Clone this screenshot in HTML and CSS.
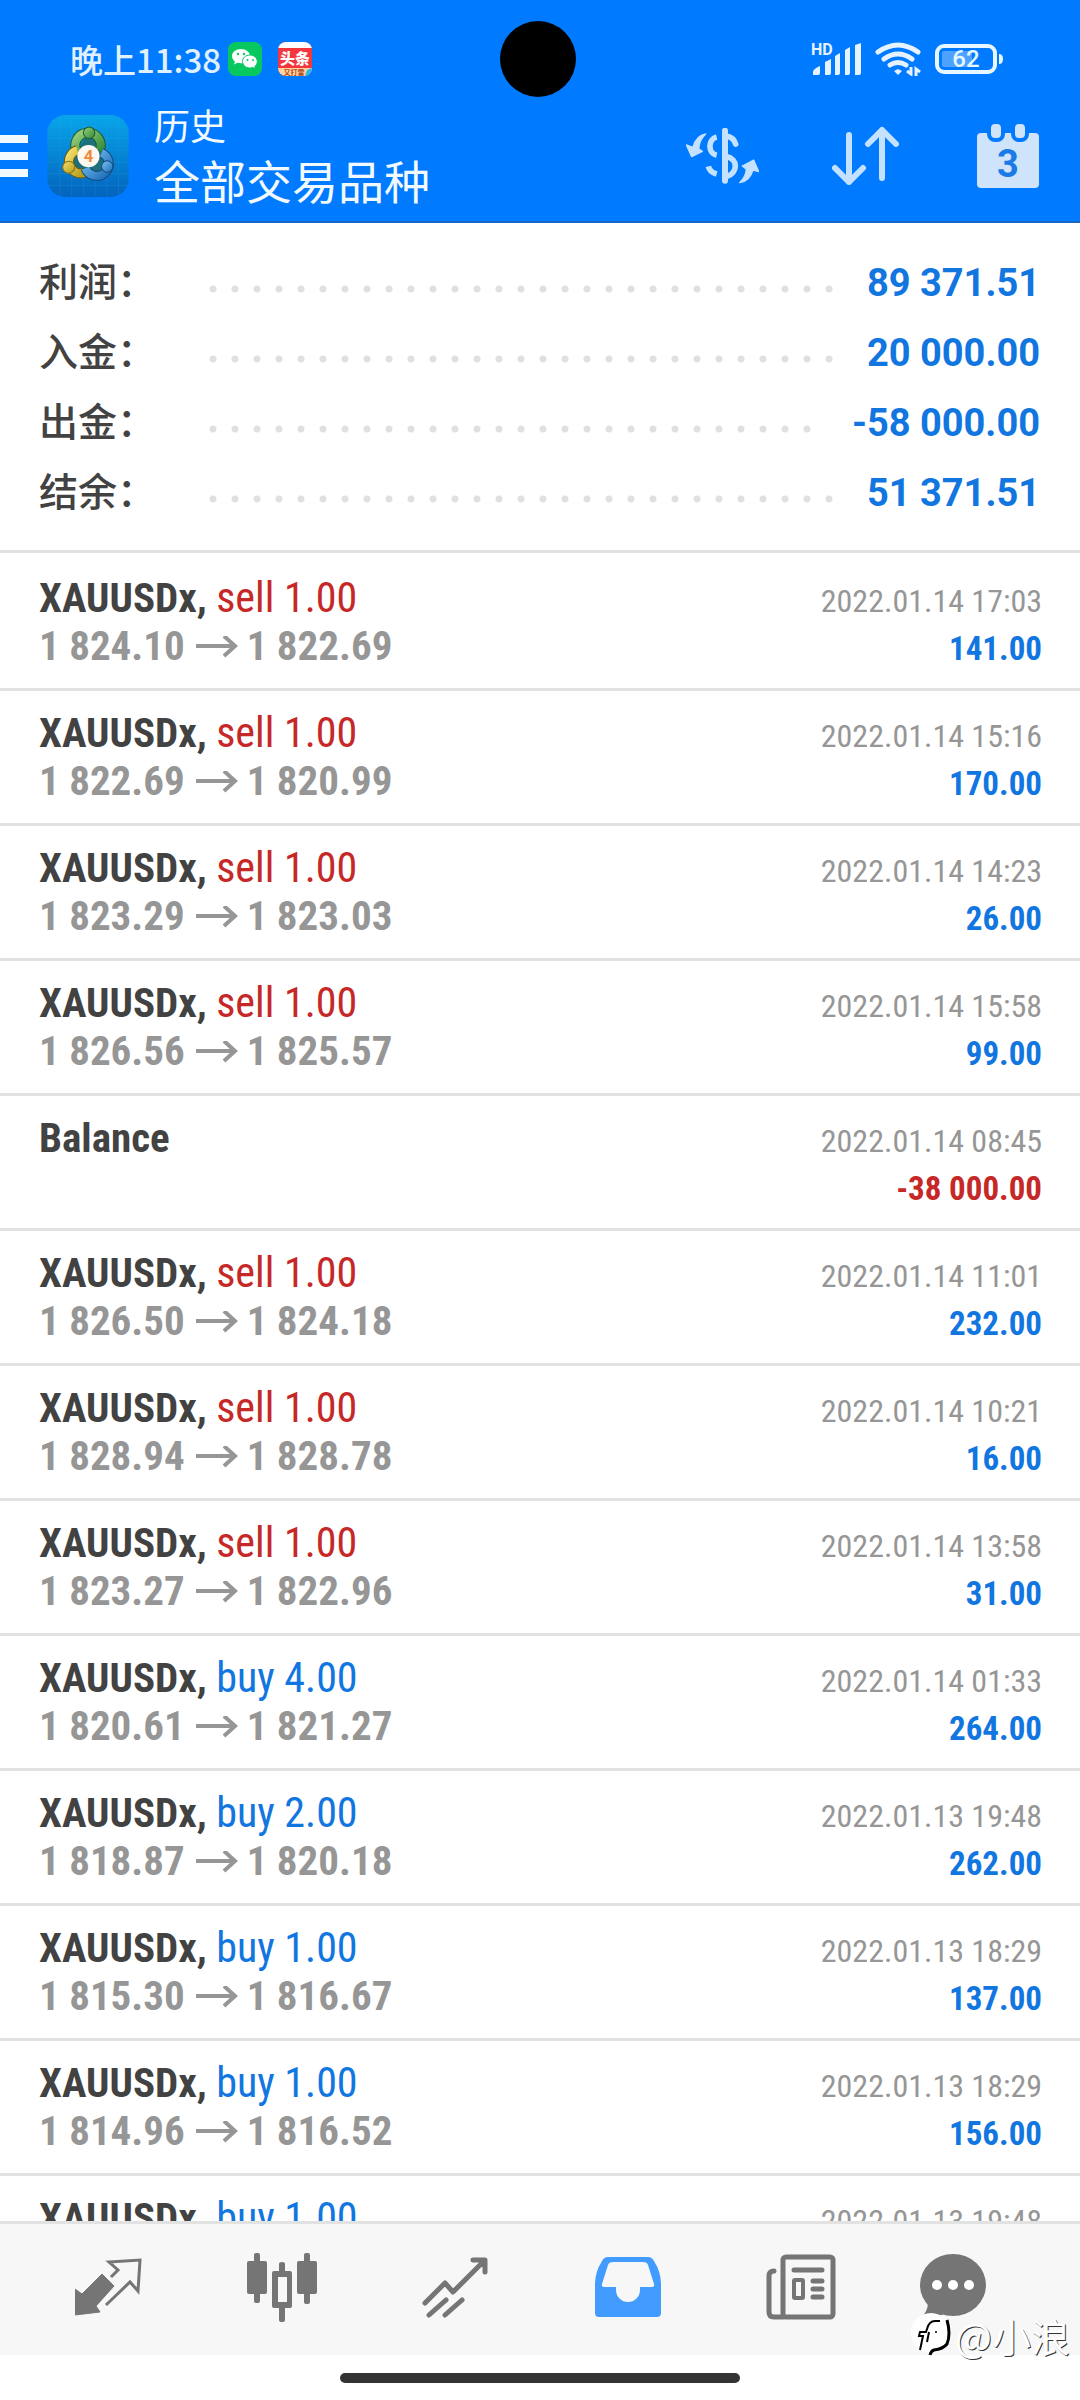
FILE: index.html
```html
<!DOCTYPE html>
<html lang="zh-CN">
<head>
<meta charset="utf-8">
<meta name="viewport" content="width=device-width, initial-scale=1">
<title>历史</title>
<link rel="stylesheet" href="styles.css">
</head>
<body>
<header class="header">
  <div class="status">
    <span class="clock">晚上11:38</span>
    <svg class="app-wechat" width="34" height="34" viewBox="0 0 34 34" aria-hidden="true">
      <rect width="34" height="34" rx="8" fill="#07c75f"/>
      <path d="M13 7c-5 0-9 3-9 7 0 2.300 1.200 4.200 3 5.500l-1 3 3.500-1.700c1 .3 2.200.5 3.500.5 5 0 9-3.300 9-7.300S18 7 13 7z" fill="#fff"/>
      <path d="M22 13c-4.500 0-7.500 3-7.500 6.500s3 6.500 7.500 6.500c1 0 2-.2 3-.5l2.500 1.500-.7-2.600c1.600-1.200 2.500-3 2.500-4.900 0-3.500-3.200-6.500-7.300-6.500z" fill="#fff" stroke="#07c75f"/>
      <g fill="#07c75f"><circle cx="10" cy="12" r="1.200"/><circle cx="16" cy="12" r="1.200"/><circle cx="19.500" cy="18" r="1"/><circle cx="25" cy="18" r="1"/></g>
    </svg>
    <svg class="app-news" width="34" height="34" viewBox="0 0 34 34" aria-hidden="true">
      <clipPath id="news-clip"><rect width="34" height="34" rx="8"/></clipPath>
      <g clip-path="url(#news-clip)">
        <rect width="34" height="34" fill="#f5363d"/>
        <rect width="34" height="6" fill="#fff"/>
        <path d="M0 26h34v8H0z" fill="#ffd2a0"/>
        <path d="M27 34l2-6 5-2v8z" fill="#29b5e8"/>
        <text x="17" y="22" class="news-name">头条</text>
        <text x="16" y="33" class="news-tag">又打雷</text>
      </g>
    </svg>
    <span class="camera"></span>
    <div class="status-icons">
      <svg class="signal" width="50" height="34" viewBox="0 0 50 34" fill="#e6f2ff" aria-hidden="true">
        <text x="0" y="13" class="hd">HD</text>
        <path d="M2 33v-3q0-3 7-6v7q0 2-2 2zM14 33V20l6-3v14q0 2-2 2zM24 33V14l5-3v20q0 2-2 2zM34 33V8l5-3v26q0 2-2 2zM44 33V3l6-2v30q0 2-2 2z"/>
      </svg>
      <svg width="46" height="34" viewBox="0 0 46 34" fill="none" stroke="#e6f2ff" stroke-width="5" stroke-linecap="round" aria-hidden="true">
        <path d="M3 10Q23-4 43 10M9 17Q23 7 37 17M15 23Q23 18 31 23"/>
        <path d="M19 29l4-2 4 2-4 4z" fill="#e6f2ff" stroke="none"/>
        <path d="M36 25v7l-4-3M41 34v-7l4 3" stroke-width="3" stroke-linecap="butt"/>
      </svg>
      <svg width="68" height="30" viewBox="0 0 68 30" aria-hidden="true">
        <rect x="2" y="2" width="58" height="26" rx="7" fill="none" stroke="#e6f7ff" stroke-width="4"/>
        <rect x="7" y="7" width="30" height="16" rx="2" fill="#4da2ff"/>
        <path d="M64 10q4 0 4 5t-4 5z" fill="#e6f7ff"/>
        <text x="31" y="23" class="battery">62</text>
      </svg>
    </div>
  </div>
  <div class="appbar">
    <button class="menu" aria-label="菜单"><i></i><i></i><i></i></button>
    <svg class="logo" width="82" height="82" viewBox="22 25 243 245" aria-hidden="true">
      <defs>
        <linearGradient id="tile" x1="0" y1="0" x2="0" y2="1"><stop offset="0" stop-color="#08a5ea"/><stop offset="1" stop-color="#0463bd"/></linearGradient>
        <linearGradient id="green" x1="0" y1="0" x2="1" y2="1"><stop offset="0" stop-color="#9ad07c"/><stop offset="1" stop-color="#2f8a3c"/></linearGradient>
        <linearGradient id="gold" x1="0" y1="0" x2="1" y2="1"><stop offset="0" stop-color="#f3e06a"/><stop offset="1" stop-color="#b59a1a"/></linearGradient>
        <linearGradient id="blue" x1="0" y1="0" x2="1" y2="1"><stop offset="0" stop-color="#7cc4f0"/><stop offset="1" stop-color="#1c6cb8"/></linearGradient>
      </defs>
      <rect x="22" y="25" width="243" height="245" rx="54" fill="url(#tile)"/>
      <path d="M60 26v243M95 26v243M130 26v243M165 26v243M200 26v243M235 26v243M23 60h241M23 95h241M23 130h241M23 165h241M23 200h241M23 235h241" stroke="#39b4ec" stroke-opacity=".25" stroke-width="2"/>
      <path d="M147 70L76 196 215 196z" fill="#1d6f7c"/>
      <g fill="none" stroke-width="24">
        <path d="M112 137A38 38 0 1 1 178 132" stroke="#1e5a2c" stroke-width="30"/>
        <path d="M112 137A38 38 0 1 1 178 132" stroke="url(#green)"/>
        <path d="M112 130A34 34 0 1 0 132 198" stroke="#6d5a10" stroke-width="30"/>
        <path d="M112 130A34 34 0 1 0 132 198" stroke="url(#gold)"/>
        <path d="M184 138A36 36 0 1 1 136 184" stroke="#114a80" stroke-width="30"/>
        <path d="M184 138A36 36 0 1 1 136 184" stroke="url(#blue)"/>
      </g>
      <g stroke-width="3">
        <circle cx="147" cy="78" r="17" fill="url(#green)" stroke="#1e5a2c"/>
        <circle cx="86" cy="181" r="18" fill="url(#gold)" stroke="#8a7414"/>
        <circle cx="201" cy="179" r="17" fill="url(#blue)" stroke="#114a80"/>
      </g>
      <circle cx="145" cy="148" r="33" fill="#fff8f0"/>
      <text x="145" y="166" class="logo-num">4</text>
    </svg>
    <div class="titles">
      <p class="subtitle">历史</p>
      <h1 class="title">全部交易品种</h1>
    </div>
    <div class="actions">
      <button aria-label="货币">
        <svg width="73" height="56" viewBox="17 24 219 168" fill="none" stroke="#c4e2ff" stroke-width="17" aria-hidden="true">
          <path d="M134 32v150" stroke-width="18" stroke-linecap="round"/>
          <path d="M138 48Q160 52 166 72" stroke-linecap="round"/>
          <path d="M109 51C82 58 82 100 109 106M84 139Q88 156 109 162"/>
          <path d="M138 110C174 116 174 158 138 170"/>
          <path d="M76 42Q48 46 38 82L18 75 34 110 66 94 55 86Q58 58 76 42zM178 188Q196 172 198 148L186 138 220 120 235 155 218 150Q208 184 178 188z" fill="#c4e2ff" stroke="#c4e2ff" stroke-width="4" stroke-linejoin="round"/>
        </svg>
      </button>
      <button aria-label="排序">
        <svg width="72" height="60" viewBox="0 0 72 60" fill="none" stroke="#c4e2ff" stroke-width="6" stroke-linecap="round" stroke-linejoin="round" aria-hidden="true">
          <path d="M17 9v47M3 42l14 14 14-14M50 52V4M36 18L50 4l14 14"/>
        </svg>
      </button>
      <button aria-label="日期">
        <svg width="62" height="64" viewBox="0 0 62 64" aria-hidden="true">
          <rect y="9" width="62" height="55" rx="4" fill="#cfe3fb"/>
          <g fill="#cfe3fb" stroke="#007aff" stroke-width="4"><rect x="12" y="-2" width="14" height="18" rx="6"/><rect x="36" y="-2" width="14" height="18" rx="6"/></g>
          <text x="31" y="53" class="day">3</text>
        </svg>
      </button>
    </div>
  </div>
</header>

<main class="main">
  <dl class="summary">
    <div><dt>利润：</dt><dd>89 371.51</dd></div>
    <div><dt>入金：</dt><dd>20 000.00</dd></div>
    <div><dt>出金：</dt><dd>-58 000.00</dd></div>
    <div><dt>结余：</dt><dd>51 371.51</dd></div>
  </dl>
  <svg width="0" height="0" class="defs" aria-hidden="true"><symbol id="arrow" viewBox="0 0 42 24"><path d="M0 10h39M28 0l11 10-11 10" fill="none" stroke="currentColor" stroke-width="4"/></symbol></svg>
  <ul class="deals">
    <li><p><span><b>XAUUSDx,</b> <span class="sell">sell 1.00</span></span><time>2022.01.14 17:03</time></p><p><span class="price">1 824.10<svg><use href="#arrow"/></svg>1 822.69</span><b class="profit">141.00</b></p></li>
    <li><p><span><b>XAUUSDx,</b> <span class="sell">sell 1.00</span></span><time>2022.01.14 15:16</time></p><p><span class="price">1 822.69<svg><use href="#arrow"/></svg>1 820.99</span><b class="profit">170.00</b></p></li>
    <li><p><span><b>XAUUSDx,</b> <span class="sell">sell 1.00</span></span><time>2022.01.14 14:23</time></p><p><span class="price">1 823.29<svg><use href="#arrow"/></svg>1 823.03</span><b class="profit">26.00</b></p></li>
    <li><p><span><b>XAUUSDx,</b> <span class="sell">sell 1.00</span></span><time>2022.01.14 15:58</time></p><p><span class="price">1 826.56<svg><use href="#arrow"/></svg>1 825.57</span><b class="profit">99.00</b></p></li>
    <li><p><span><b>Balance</b></span><time>2022.01.14 08:45</time></p><p><span class="price">&nbsp;</span><b class="profit loss">-38 000.00</b></p></li>
    <li><p><span><b>XAUUSDx,</b> <span class="sell">sell 1.00</span></span><time>2022.01.14 11:01</time></p><p><span class="price">1 826.50<svg><use href="#arrow"/></svg>1 824.18</span><b class="profit">232.00</b></p></li>
    <li><p><span><b>XAUUSDx,</b> <span class="sell">sell 1.00</span></span><time>2022.01.14 10:21</time></p><p><span class="price">1 828.94<svg><use href="#arrow"/></svg>1 828.78</span><b class="profit">16.00</b></p></li>
    <li><p><span><b>XAUUSDx,</b> <span class="sell">sell 1.00</span></span><time>2022.01.14 13:58</time></p><p><span class="price">1 823.27<svg><use href="#arrow"/></svg>1 822.96</span><b class="profit">31.00</b></p></li>
    <li><p><span><b>XAUUSDx,</b> <span class="buy">buy 4.00</span></span><time>2022.01.14 01:33</time></p><p><span class="price">1 820.61<svg><use href="#arrow"/></svg>1 821.27</span><b class="profit">264.00</b></p></li>
    <li><p><span><b>XAUUSDx,</b> <span class="buy">buy 2.00</span></span><time>2022.01.13 19:48</time></p><p><span class="price">1 818.87<svg><use href="#arrow"/></svg>1 820.18</span><b class="profit">262.00</b></p></li>
    <li><p><span><b>XAUUSDx,</b> <span class="buy">buy 1.00</span></span><time>2022.01.13 18:29</time></p><p><span class="price">1 815.30<svg><use href="#arrow"/></svg>1 816.67</span><b class="profit">137.00</b></p></li>
    <li><p><span><b>XAUUSDx,</b> <span class="buy">buy 1.00</span></span><time>2022.01.13 18:29</time></p><p><span class="price">1 814.96<svg><use href="#arrow"/></svg>1 816.52</span><b class="profit">156.00</b></p></li>
    <li><p><span><b>XAUUSDx,</b> <span class="buy">buy 1.00</span></span><time>2022.01.13 19:48</time></p></li>
  </ul>
</main>

<nav class="tabs">
  <a href="#quotes" aria-label="行情">
    <svg width="67" height="58" viewBox="0 0 67 58" aria-hidden="true">
      <path d="M0 31l7 5 20-20 12 12-18 20 4 6-25 3z" fill="currentColor" stroke="currentColor" stroke-linejoin="round"/>
      <path d="M31 47l24-23 8 9 2-31-31 2 9 8-7 7" fill="none" stroke="currentColor" stroke-width="3"/>
    </svg>
  </a>
  <a href="#charts" aria-label="图表">
    <svg width="70" height="69" viewBox="0 0 70 69" fill="currentColor" aria-hidden="true">
      <rect y="8" width="20" height="33" rx="2"/><rect x="7" width="6" height="50" rx="2"/>
      <rect x="50" y="8" width="20" height="33" rx="2"/><rect x="57" width="6" height="51" rx="2"/>
      <path d="M32 18v-7q0-2 3-2t3 2v7h5q2 0 2 2v33q0 2-2 2h-5v12q0 2-3 2t-3-2V55h-5q-2 0-2-2V20q0-2 2-2zM31 24v25h9V24z" fill-rule="evenodd"/>
    </svg>
  </a>
  <a href="#trade" aria-label="交易">
    <svg width="66" height="61" viewBox="0 0 66 61" fill="none" stroke="currentColor" stroke-width="5" stroke-linecap="round" stroke-linejoin="round" aria-hidden="true">
      <path d="M3 46l20-20 8 9L62 4M51 3h12v12M24 43L7 58M40 43L23 58"/>
    </svg>
  </a>
  <a href="#history" class="active" aria-label="历史" aria-current="page">
    <svg width="66" height="61" viewBox="0 0 66 61" fill="currentColor" fill-rule="evenodd" aria-hidden="true">
      <path d="M13 0H53Q57 0 59 4 66 15 66 27V56Q66 60 62 60H4Q0 60 0 56V27Q0 15 7 4 9 0 13 0zM18 5Q14 5 13 8L7 27Q6 30 9 30H21V33A12 12 0 0 0 45 33V30H57Q60 30 59 27L53 8Q52 5 48 5z"/>
    </svg>
  </a>
  <a href="#news" aria-label="新闻">
    <svg width="70" height="66" viewBox="0 0 70 66" fill="none" stroke="currentColor" stroke-width="5" stroke-linecap="round" aria-hidden="true">
      <rect x="17" y="3" width="50" height="60" rx="3"/>
      <path d="M8 17Q3 17 3 22V58Q3 63 8 63H17M28 16H56M47 27H56M47 35H56M47 43H56"/>
      <rect x="28" y="26" width="9" height="18" rx="1" stroke-width="4"/>
    </svg>
  </a>
  <a href="#chat" aria-label="消息">
    <svg width="66" height="66" viewBox="0 0 66 66" fill="currentColor" aria-hidden="true">
      <ellipse cx="33" cy="31" rx="33" ry="31"/><path d="M8 48Q8 58 0 65 12 66 26 59z"/>
      <g fill="#fff"><circle cx="17" cy="31" r="5"/><circle cx="33" cy="31" r="5"/><circle cx="49" cy="31" r="5"/></g>
    </svg>
  </a>
  <div class="watermark">
    <svg width="42" height="46" viewBox="0 0 42 46" aria-hidden="true">
      <circle cx="20" cy="21" r="20" fill="#fff"/>
      <path d="M29 9h-5q-6 0-8 8l-1 3h-6l-1 4h4l-3 14M18 20l-2 10" fill="none" stroke="#000" stroke-width="2"/>
      <path d="M36 8q4 14 0 24-4 5-13 6-3 1-4 5" fill="none" stroke="#000" stroke-width="3"/>
      <circle cx="25" cy="20" r="1" fill="#000"/>
    </svg>
    <span>@小浪</span>
  </div>
</nav>
<div class="home"><span></span></div>
</body>
</html>
```
FILE: styles.css
```css
* { box-sizing: border-box; margin: 0; padding: 0; }

body {
  display: flex;
  flex-direction: column;
  height: 100vh;
  overflow: hidden;
  background: #fff;
  color: #424242;
  font-family: "Roboto", "Noto Sans CJK SC", sans-serif;
}

button { border: 0; background: none; display: flex; cursor: pointer; }
svg { flex: none; display: block; }

/* Header */
.header { background: #007aff; border-bottom: 2px solid #1668c4; color: #f2faff; }

.status {
  position: relative;
  display: flex;
  align-items: center;
  height: 98px;
  padding: 20px 77px 0 70px;
}
.clock {
  font: 500 33px/36px "Noto Sans CJK SC", sans-serif;
  color: #e0f0ff;
}
.app-wechat { margin-left: 7px; }
.app-news { margin-left: 16px; }
.camera {
  position: absolute;
  left: 50%;
  top: 21px;
  width: 76px;
  height: 76px;
  margin-left: -40px;
  border-radius: 50%;
  background: #000;
}
.status-icons { display: flex; align-items: center; gap: 14px; margin-left: auto; }
.signal { overflow: visible; }
.hd { font: 700 16px "Roboto", sans-serif; }
.battery { font: 500 24px "Roboto", sans-serif; fill: #e6f7ff; text-anchor: middle; }
.news-name { font: 900 15px "Noto Sans CJK SC", sans-serif; fill: #fff; text-anchor: middle; }
.news-tag { font: 700 7px "Noto Sans CJK SC", sans-serif; fill: #b04a20; text-anchor: middle; }

.appbar { display: flex; align-items: center; height: 123px; padding: 0 41px 7px 0; }
.menu { flex-direction: column; gap: 9px; width: 28px; }
.menu i { width: 28px; height: 8px; background: #f2faff; }
.logo { margin-left: 19px; }
.logo-num { font: 700 50px "Roboto", sans-serif; fill: #ef8a3c; text-anchor: middle; }
.titles { margin-left: 25px; padding-bottom: 6px; font-family: "Noto Sans CJK SC", sans-serif; }
.subtitle { font-size: 36px; line-height: 52px; }
.title { font-size: 46px; line-height: 58px; font-weight: 400; }
.actions { display: flex; align-items: center; gap: 73px; margin-left: auto; }
.day { font: 700 38px "Roboto", sans-serif; fill: #1a7ae6; text-anchor: middle; }

/* Content */
.main { flex: 1; min-height: 0; overflow: hidden; }
.defs { position: absolute; }

.summary { padding: 23px 40px 24px 39px; border-bottom: 3px solid #e2e2e2; }
.summary div { display: flex; align-items: center; height: 70px; }
.summary dt { width: 170px; padding-bottom: 4px; font: 500 39px/60px "Noto Sans CJK SC", sans-serif; }
.summary dd {
  display: flex;
  flex: 1;
  align-items: center;
  padding-top: 4px;
  font-size: 38px;
  line-height: 48px;
  font-weight: 700;
  color: #1276e0;
}
.summary dd::before {
  content: "";
  flex: 1;
  height: 8px;
  margin: 12px 30px 0 0;
  background: radial-gradient(circle at 4px 4px, #e0e0e0 3px, transparent 4px) repeat-x;
  background-size: 22px 8px;
}

.deals { list-style: none; padding-top: 3px; font-family: "Roboto Condensed", "Roboto", sans-serif; font-size: 41px; line-height: 48px; }
.deals li { padding: 18px 38px 18px 39px; border-bottom: 3px solid #e2e2e2; }
.deals p { display: flex; align-items: baseline; justify-content: space-between; height: 48px; }
.deals svg { display: inline-block; width: 42px; height: 24px; margin: 0 9px 0 11px; }
.sell, .buy { font-size: 42px; line-height: 44px; }
.sell { color: #c62828; }
.buy { color: #1276e0; }
.price { color: #969696; font-weight: 700; }
.deals time { font-size: 32px; line-height: 36px; color: #969696; }
.profit { font-size: 33px; line-height: 36px; color: #1276e0; }
.profit.loss { color: #c62828; }

/* Bottom tabs */
.tabs {
  position: relative;
  display: grid;
  grid-template-columns: repeat(5, 4fr) 3fr;
  height: 134px;
  padding: 0 62px 0 22px;
  border-top: 3px solid #e2e2e2;
  background: #f7f7f7;
}
.tabs a { display: flex; align-items: center; justify-content: center; padding-bottom: 5px; color: #757575; }
.tabs .active { color: #429cff; }

.watermark {
  position: absolute;
  right: 10px;
  bottom: -8px;
  display: flex;
  align-items: center;
  gap: 2px;
  color: #fff;
  font: 400 39px/56px "Noto Sans CJK SC", sans-serif;
  text-shadow: 1px 1px 0 #333;
}

.home { display: flex; justify-content: center; height: 45px; padding-top: 18px; background: #fff; }
.home span { width: 37%; height: 10px; border-radius: 5px; background: #333; }
```
